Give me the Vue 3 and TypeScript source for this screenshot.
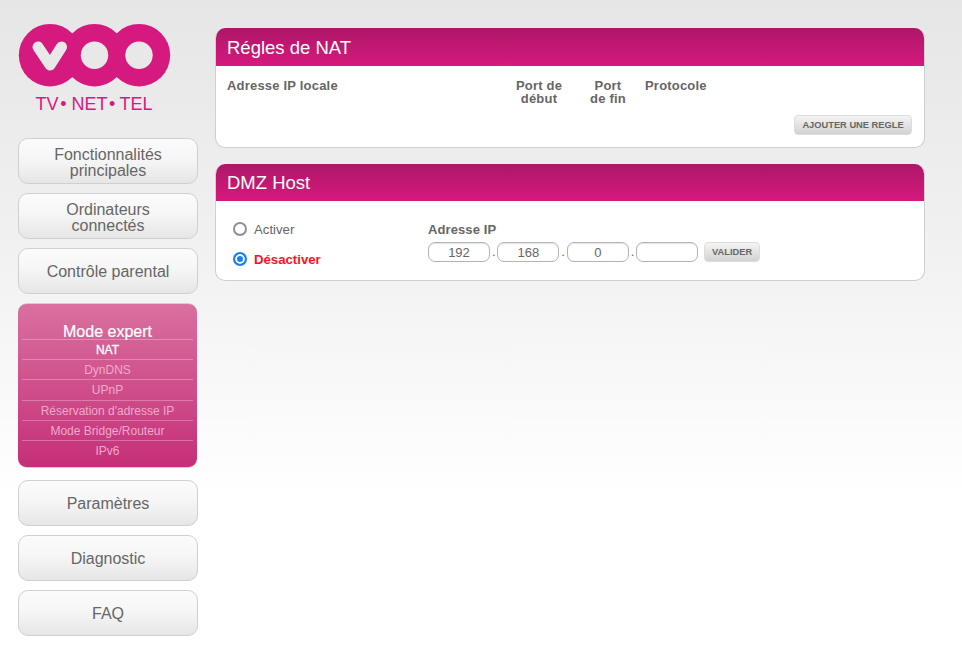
<script setup lang="ts">
interface NavItem {
  label: string[];
}

const topItems: NavItem[] = [
  { label: ["Fonctionnalités", "principales"] },
  { label: ["Ordinateurs", "connectés"] },
  { label: ["Contrôle parental"] },
];

const bottomItems: NavItem[] = [
  { label: ["Paramètres"] },
  { label: ["Diagnostic"] },
  { label: ["FAQ"] },
];

const expertLinks = [
  "NAT",
  "DynDNS",
  "UPnP",
  "Réservation d'adresse IP",
  "Mode Bridge/Routeur",
  "IPv6",
];

const ipParts = ["192", "168", "0", ""];
</script>

<template>
  <div class="page">
    <aside class="sidebar">
      <div class="logo">
        <svg width="180" height="118" viewBox="0 0 180 118">
          <circle cx="50" cy="55.2" r="31.2" fill="#d6197e" />
          <circle cx="94.5" cy="55.2" r="31.2" fill="#d6197e" />
          <circle cx="139" cy="55.2" r="31.2" fill="#d6197e" />
          <circle cx="94.5" cy="55.2" r="13.7" fill="#e8e8e8" />
          <circle cx="139" cy="55.2" r="13.7" fill="#e8e8e8" />
          <path
            d="M38 47 L50 65 L61.5 47"
            fill="none"
            stroke="#e8e8e8"
            stroke-width="11"
            stroke-linecap="round"
            stroke-linejoin="round"
          />
          <text y="110" class="logo-text">
            <tspan x="35.5">TV</tspan>
            <tspan x="60.2">•</tspan>
            <tspan x="71.5">NET</tspan>
            <tspan x="109">•</tspan>
            <tspan x="119.5">TEL</tspan>
          </text>
        </svg>
      </div>

      <nav class="nav">
        <a
          v-for="item in topItems"
          :key="item.label[0]"
          class="nav-btn"
          :class="{ two: item.label.length > 1 }"
        >
          <span v-for="line in item.label" :key="line">{{ line }}</span>
        </a>

        <div class="expert">
          <div class="expert-title">Mode expert</div>
          <a
            v-for="(link, i) in expertLinks"
            :key="link"
            class="expert-link"
            :class="{ active: i === 0 }"
          >{{ link }}</a>
        </div>

        <a v-for="item in bottomItems" :key="item.label[0]" class="nav-btn">
          <span v-for="line in item.label" :key="line">{{ line }}</span>
        </a>
      </nav>
    </aside>

    <main class="content">
      <section class="panel">
        <h2 class="panel-head nat-head">Régles de NAT</h2>
        <div class="nat-body">
          <div class="nat-cols">
            <b>Adresse IP locale</b>
            <b class="center">Port de<br />début</b>
            <b class="center">Port<br />de fin</b>
            <b class="proto">Protocole</b>
          </div>
          <div class="nat-actions">
            <button class="grey-btn add-btn">AJOUTER UNE REGLE</button>
          </div>
        </div>
      </section>

      <section class="panel">
        <h2 class="panel-head">DMZ Host</h2>
        <div class="dmz-body">
          <div class="radios">
            <label class="radio">
              <span class="dot"></span>
              Activer
            </label>
            <label class="radio on">
              <span class="dot"></span>
              Désactiver
            </label>
          </div>
          <div class="ip-block">
            <b class="ip-label">Adresse IP</b>
            <div class="ip-row">
              <template v-for="(part, i) in ipParts" :key="i">
                <input class="ip-input" type="text" :value="part" />
                <span v-if="i < 3" class="ip-sep">.</span>
              </template>
              <button class="grey-btn ok-btn">VALIDER</button>
            </div>
          </div>
        </div>
      </section>
    </main>
  </div>
</template>

<style>
html,
body {
  margin: 0;
  background: #fff;
}
</style>

<style scoped>
.page {
  display: flex;
  height: 665px;
  box-sizing: border-box;
  overflow: hidden;
  padding: 0 0 0 18px;
  background: linear-gradient(to bottom, #e6e6e6 0, #f1f1f1 250px, #ffffff 500px);
  font-family: "Liberation Sans", Arial, sans-serif;
  color: #666;
}

.sidebar {
  width: 180px;
  flex: none;
}

.logo {
  height: 138px;
  margin-left: -18px;
}

.logo svg {
  display: block;
}

.logo-text {
  font-family: "Liberation Sans", Arial, sans-serif;
  font-size: 18px;
  fill: #d6197e;
}

.nav {
  display: flex;
  flex-direction: column;
  gap: 9px;
}

.nav-btn {
  display: flex;
  flex-direction: column;
  align-items: center;
  justify-content: center;
  height: 46px;
  box-sizing: border-box;
  padding-top: 2px;
  border: 1px solid #d0d0d0;
  border-radius: 10px;
  background: linear-gradient(to bottom, #fbfbfb 0, #f6f6f6 45%, #e6e6e6 100%);
  font-size: 16px;
  line-height: 16px;
  color: #666;
}

.nav-btn.two {
  padding-top: 4px;
}

.expert {
  width: 179px;
  height: 165px;
  box-sizing: border-box;
  margin-bottom: 3px;
  padding: 20px 4px 0;
  border-radius: 9px;
  border-top: 1px solid #cfcfcf;
  border-bottom: 1px solid #cfcfcf;
  background: linear-gradient(to bottom, #d9709f 0, #c52f78 100%);
  text-align: center;
}

.expert-title {
  height: 15px;
  font-size: 16px;
  line-height: 15px;
  color: #fff;
  -webkit-text-stroke: 0.2px #fff;
}

.expert-link {
  display: block;
  height: 20.2px;
  border-top: 1px solid rgba(255, 255, 255, 0.28);
  box-sizing: border-box;
  font-size: 12px;
  line-height: 20px;
  color: #f0a9cb;
}

.expert-link.active {
  color: #fff;
  -webkit-text-stroke: 0.3px #fff;
}

.content {
  display: flex;
  flex-direction: column;
  gap: 16px;
  width: 710px;
  margin-left: 17px;
  padding-top: 28px;
}

.panel {
  box-sizing: border-box;
  overflow: hidden;
  border: 1px solid #cfcfcf;
  border-top: 0;
  border-radius: 10px;
  background: #fff;
}

.panel-head {
  height: 37px;
  margin: 0 -1px;
  padding-left: 12px;
  background: linear-gradient(to bottom, #ad1767 0, #d6197e 100%);
  color: #fff;
  font-size: 18.5px;
  font-weight: normal;
  line-height: 38px;
}

.nat-head {
  height: 38px;
  line-height: 39px;
}

.nat-body {
  height: 81px;
  box-sizing: border-box;
  padding: 13px 12px 0 11px;
}

.nat-cols {
  display: grid;
  grid-template-columns: 270px 84px 54px 1fr;
  font-size: 13px;
  line-height: 13px;
  letter-spacing: 0.2px;
}

.center {
  text-align: center;
}

.proto {
  padding-left: 10px;
}

.nat-actions {
  display: flex;
  justify-content: flex-end;
  margin-top: 10px;
}

.grey-btn {
  display: block;
  box-sizing: border-box;
  margin: 0;
  padding: 0;
  border: 1px solid #dcdcdc;
  border-radius: 4px;
  background: linear-gradient(to bottom, #f4f4f4 0, #d2d2d2 100%);
  font-family: "Liberation Sans", Arial, sans-serif;
  font-size: 9.3px;
  font-weight: bold;
  color: #666;
}

.add-btn {
  width: 118px;
  height: 20px;
}

.ok-btn {
  width: 56px;
  height: 20px;
  margin-left: 6px;
}

.dmz-body {
  display: flex;
  height: 79px;
  box-sizing: border-box;
  padding: 20px 0 0 17px;
}

.radios {
  width: 195px;
  flex: none;
  display: flex;
  flex-direction: column;
  gap: 14px;
}

.radio {
  display: flex;
  align-items: center;
  gap: 7px;
  height: 16px;
  font-size: 13.2px;
  color: #666;
}

.radio .dot {
  width: 14px;
  height: 14px;
  box-sizing: border-box;
  border: 2px solid #8e8e96;
  border-radius: 50%;
  background: #fff;
}

.radio.on {
  color: #f5141e;
  font-weight: bold;
}

.radio.on .dot {
  border-color: #1a7ff0;
  box-shadow: inset 0 0 0 2px #fff;
  background: #1a7ff0;
}

.ip-block {
  display: flex;
  flex-direction: column;
  padding-top: 1px;
}

.ip-label {
  font-size: 13px;
  line-height: 15px;
  height: 19px;
  letter-spacing: 0.1px;
}

.ip-row {
  display: flex;
  align-items: center;
  margin-top: 1px;
}

.ip-input {
  width: 62px;
  height: 20px;
  box-sizing: border-box;
  padding: 0;
  border: 1px solid #b4b4b4;
  border-radius: 7px;
  background: #fff;
  box-shadow: inset 0 1px 1px #e4e4e4;
  font-family: "Liberation Sans", Arial, sans-serif;
  font-size: 13px;
  color: #666;
  text-align: center;
  outline: none;
}

.ip-sep {
  width: 7.4px;
  font-size: 13px;
  line-height: 20px;
  text-align: center;
}
</style>
